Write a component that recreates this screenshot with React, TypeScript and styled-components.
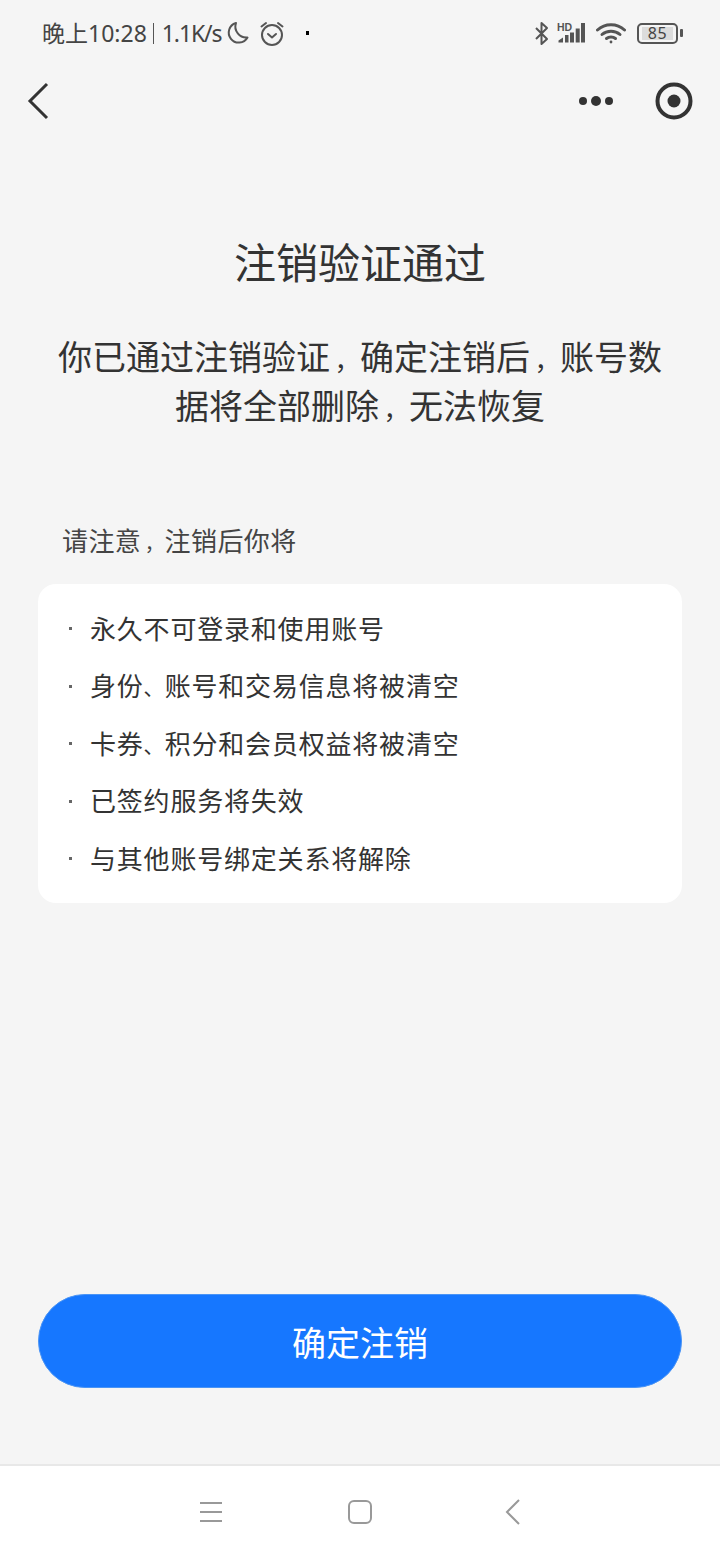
import styled, { createGlobalStyle } from 'styled-components';

const GlobalStyle = createGlobalStyle`
  html, body {
    margin: 0;
    padding: 0;
    background: #f5f5f5;
  }
  * {
    box-sizing: border-box;
  }
`;

const Page = styled.div`
  width: 720px;
  height: 1560px;
  display: flex;
  flex-direction: column;
  background: #f5f5f5;
  color: #333;
  font-family: "Noto Sans", "Noto Sans CJK SC", sans-serif;
  overflow: hidden;
`;

const StatusBar = styled.div`
  height: 68px;
  flex: none;
  display: flex;
  align-items: center;
  padding: 0 37px 2px 42px;
  color: #444;
  font-size: 23px;
`;

const StatusText = styled.span<{ $tight?: boolean }>`
  line-height: 1;
  white-space: nowrap;
  letter-spacing: ${(p) => (p.$tight ? '-1.1px' : '0')};
`;

const Divider = styled.span`
  width: 1px;
  height: 21px;
  background: #555;
  margin: 0 8px 0 6px;
`;

const StatusLeft = styled.div`
  display: flex;
  align-items: center;
  flex: 1;
`;

const StatusRight = styled.div`
  display: flex;
  align-items: center;
`;

const TinyDot = styled.span`
  width: 3px;
  height: 4px;
  background: #000;
  margin-left: 22px;
`;

const StatusIcon = styled.svg<{ $left?: number }>`
  display: block;
  flex: none;
  margin-left: ${(p) => p.$left ?? 0}px;
`;

const Battery = styled.div`
  width: 41px;
  height: 21px;
  margin-left: 11px;
  border: 2px solid #555;
  border-radius: 5px;
  padding: 2px 3px;
  display: flex;
`;

const BatteryFill = styled.div`
  flex: 1;
  background: #dcdcdc;
  color: #444;
  font-size: 16px;
  line-height: 13px;
  letter-spacing: 0.5px;
  text-align: center;
`;

const BatteryTip = styled.span`
  width: 3px;
  height: 8px;
  margin-left: 2px;
  background: #555;
  border-radius: 1px;
`;

const NavBar = styled.div`
  height: 64px;
  flex: none;
  display: flex;
  align-items: center;
  justify-content: space-between;
  padding: 2px 27px 0 26px;
`;

const NavActions = styled.div`
  display: flex;
  align-items: center;
  gap: 41px;
`;

const Main = styled.main`
  flex: 1;
  display: flex;
  flex-direction: column;
`;

const Title = styled.h1`
  margin: 99px 0 0;
  font-size: 42px;
  font-weight: 400;
  line-height: 64px;
  text-align: center;
  color: #333;
`;

const Lead = styled.p`
  margin: 38px 56px 0;
  font-size: 34px;
  line-height: 49px;
  text-align: center;
  color: #333;
`;

const LeadLine = styled.span`
  display: block;
  white-space: nowrap;
`;

// the commas in the reference are small and sit in a gap under a full em
const Comma = styled.span`
  font-size: 0.75em;
  line-height: 1;
  padding-left: 0.18em;
`;

const Pause = styled.span`
  font-size: 0.78em;
  line-height: 1;
`;

const NoticeLabel = styled.p`
  margin: 90px 0 0 62px;
  font-size: 26px;
  letter-spacing: 0.4px;
  line-height: 40px;
  color: #444;
`;

const Card = styled.ul`
  list-style: none;
  margin: 23px 38px 0;
  padding: 15px 0 15px 30px;
  height: 319px;
  background: #fff;
  border-radius: 18px;
`;

const CardItem = styled.li`
  display: flex;
  align-items: center;
  height: 57.5px;
  font-size: 26px;
  letter-spacing: 0.8px;
  color: #333;
`;

const Bullet = styled.span`
  width: 3px;
  height: 3px;
  margin: 2px 18px 0 1px;
  background: #666;
`;

const Footer = styled.div`
  margin-top: auto;
  padding: 0 38px 76px;
`;

const ConfirmButton = styled.button`
  display: block;
  width: 100%;
  height: 94px;
  border: 1px solid #4a94f5;
  border-radius: 47px;
  background: #1677ff;
  color: #fff;
  font-family: inherit;
  font-size: 34px;
  letter-spacing: 0;
`;

const SystemNav = styled.div`
  height: 96px;
  flex: none;
  display: flex;
  align-items: center;
  justify-content: space-between;
  padding: 0 200px 2px 200px;
  background: #fff;
  border-top: 2px solid #e8e8e8;
`;

const HomeIcon = styled.svg`
  margin-right: 7px;
`;

const items = [
  ['永久不可登录和使用账号'],
  ['身份', '账号和交易信息将被清空'],
  ['卡券', '积分和会员权益将被清空'],
  ['已签约服务将失效'],
  ['与其他账号绑定关系将解除'],
];

export default function App() {
  return (
    <Page>
      <GlobalStyle />
      <StatusBar>
        <StatusLeft>
          <StatusText>晚上10:28</StatusText>
          <Divider />
          <StatusText $tight>1.1K/s</StatusText>
          <StatusIcon $left={5} width="23" height="24" viewBox="0 0 23 24" fill="none">
            <path d="M10 2a10 10 0 1 0 11.5 14.5A11 11 0 0 1 10 2z" stroke="#555" strokeWidth="2" strokeLinejoin="round" />
          </StatusIcon>
          <StatusIcon $left={11} width="24" height="25" viewBox="0 0 24 25" fill="none" stroke="#555" strokeWidth="2" strokeLinecap="round" strokeLinejoin="round">
            <circle cx="12" cy="14" r="10" />
            <path d="M8 13l4 3.5 4-3.5" />
            <path d="M1.5 5.5L6 2M22.5 5.5L18 2" />
          </StatusIcon>
          <TinyDot />
        </StatusLeft>
        <StatusRight>
          <StatusIcon width="16" height="25" viewBox="0 0 16 25" fill="none">
            <path d="M2 7l11 11-5.5 5V2L13 7 2 18" stroke="#555" strokeWidth="2" strokeLinejoin="round" />
          </StatusIcon>
          <StatusIcon $left={7} width="30" height="22" viewBox="0 0 30 22" fill="#555">
            <text x="0" y="9" fontSize="10.5" fontWeight="700" fontFamily="Liberation Sans, sans-serif">HD</text>
            <path d="M1.5 20.5v-2l4.5-3v5zM8 20.5V13h3.5v7.5zM13 20.5v-10h4v10zM18.7 20.5v-14h4v14zM24 20.5V1h4v19.5z" />
          </StatusIcon>
          <StatusIcon $left={9} width="30" height="22" viewBox="0 0 30 22" fill="none" stroke="#555" strokeWidth="3" strokeLinecap="round">
            <path d="M1.5 8C9 1 21 1 28.5 8" />
            <path d="M6 12.5c5-4.5 13-4.5 18 0" />
            <path d="M10.5 16.5c2.5-2 6.5-2 9 0" />
            <circle cx="15" cy="20" r="1.4" fill="#555" stroke="none" />
          </StatusIcon>
          <Battery>
            <BatteryFill>85</BatteryFill>
          </Battery>
          <BatteryTip />
        </StatusRight>
      </StatusBar>
      <NavBar>
        <svg width="24" height="38" viewBox="0 0 24 38" fill="none">
          <path d="M21 2L4 19l17 17" stroke="#333" strokeWidth="3" />
        </svg>
        <NavActions>
          <svg width="36" height="12" viewBox="0 0 36 12" fill="#333">
            <circle cx="5" cy="6" r="4" />
            <circle cx="18" cy="6" r="5" />
            <circle cx="31" cy="6" r="4" />
          </svg>
          <svg width="38" height="38" viewBox="0 0 38 38" fill="none">
            <circle cx="19" cy="19" r="16.5" stroke="#333" strokeWidth="4" />
            <circle cx="19" cy="19" r="6.5" fill="#333" />
          </svg>
        </NavActions>
      </NavBar>
      <Main>
        <Title>注销验证通过</Title>
        <Lead>
          <LeadLine>你已通过注销验证<Comma>，</Comma>确定注销后<Comma>，</Comma>账号数</LeadLine>
          <LeadLine>据将全部删除<Comma>，</Comma>无法恢复</LeadLine>
        </Lead>
        <NoticeLabel>请注意<Comma>，</Comma>注销后你将</NoticeLabel>
        <Card>
          {items.map((parts) => (
            <CardItem key={parts[0]}>
              <Bullet />
              <span>
                {parts[0]}
                {parts[1] && <Pause>、</Pause>}
                {parts[1]}
              </span>
            </CardItem>
          ))}
        </Card>
        <Footer>
          <ConfirmButton>确定注销</ConfirmButton>
        </Footer>
      </Main>
      <SystemNav>
        <svg width="22" height="20" viewBox="0 0 22 20" fill="#999">
          <rect width="22" height="2" y="0" />
          <rect width="22" height="2" y="9" />
          <rect width="22" height="2" y="18" />
        </svg>
        <HomeIcon width="24" height="24" viewBox="0 0 24 24" fill="none">
          <rect x="1" y="1" width="22" height="22" rx="5" stroke="#999" strokeWidth="2" />
        </HomeIcon>
        <svg width="15" height="26" viewBox="0 0 15 26" fill="none">
          <path d="M14 1L2 13l12 12" stroke="#999" strokeWidth="2" />
        </svg>
      </SystemNav>
    </Page>
  );
}
